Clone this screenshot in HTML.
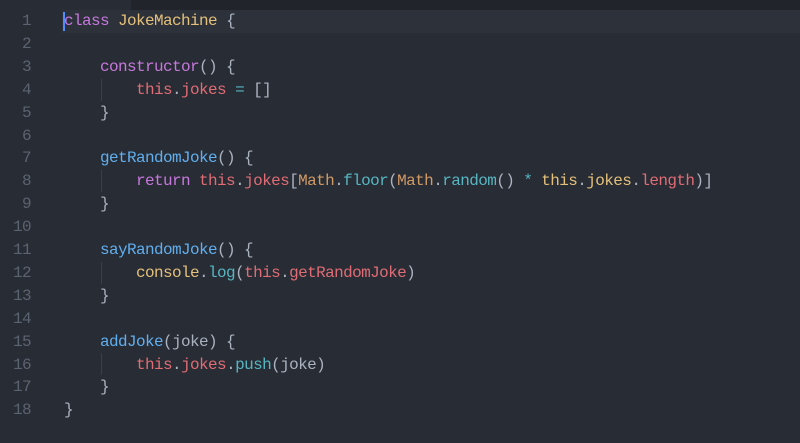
<!DOCTYPE html>
<html><head><style>
body{margin:0;width:800px;height:443px;background:#282c34;overflow:hidden;position:relative;font-family:"Liberation Mono",monospace;font-size:16px;letter-spacing:-0.6px}
.top{position:absolute;left:131px;top:0;width:669px;height:10px;background:#21252b}
.hl{position:absolute;left:62px;top:10px;width:738px;height:23px;background:#2c313a}
.cur{position:absolute;left:63px;top:12px;width:2px;height:19px;background:#528bff}
.ln{position:absolute;left:0;width:31px;text-align:right;color:#5c6370}
.c{position:absolute;left:64px;white-space:pre;color:#abb2bf}
.g{position:absolute;width:1px;background:#3b4048}
.k{color:#c678dd}.y{color:#e5c07b}.b{color:#61afef}.r{color:#e06c75}.t{color:#56b6c2}.o{color:#d19a66}
</style></head><body>
<div class="top"></div><div class="hl"></div>
<div class="g" style="left:101px;top:79px;height:22px"></div>
<div class="g" style="left:101px;top:170px;height:22px"></div>
<div class="g" style="left:101px;top:262px;height:22px"></div>
<div class="g" style="left:101px;top:353px;height:22px"></div>
<div id="w"></div>
<script>
var L=['<span class="k">class</span> <span class="y">JokeMachine</span> {','',
'    <span class="k">constructor</span>() {','        <span class="r">this</span>.<span class="r">jokes</span> <span class="t">=</span> []','    }','',
'    <span class="b">getRandomJoke</span>() {','        <span class="k">return</span> <span class="r">this</span>.<span class="r">jokes</span>[<span class="o">Math</span>.<span class="t">floor</span>(<span class="o">Math</span>.<span class="t">random</span>() <span class="t">*</span> <span class="y">this</span>.<span class="y">jokes</span>.<span class="r">length</span>)]','    }','',
'    <span class="b">sayRandomJoke</span>() {','        <span class="y">console</span>.<span class="t">log</span>(<span class="r">this</span>.<span class="r">getRandomJoke</span>)','    }','',
'    <span class="b">addJoke</span>(joke) {','        <span class="r">this</span>.<span class="r">jokes</span>.<span class="t">push</span>(joke)','    }','}'];
var h='';for(var i=0;i<18;i++){var t=10+i*22.9;h+='<div class="ln" style="top:'+(t+2)+'px">'+(i+1)+'</div><div class="c" style="top:'+(t+2)+'px">'+L[i]+'</div>';}
document.getElementById('w').innerHTML=h;
</script>
<div class="cur"></div>
</body></html>
